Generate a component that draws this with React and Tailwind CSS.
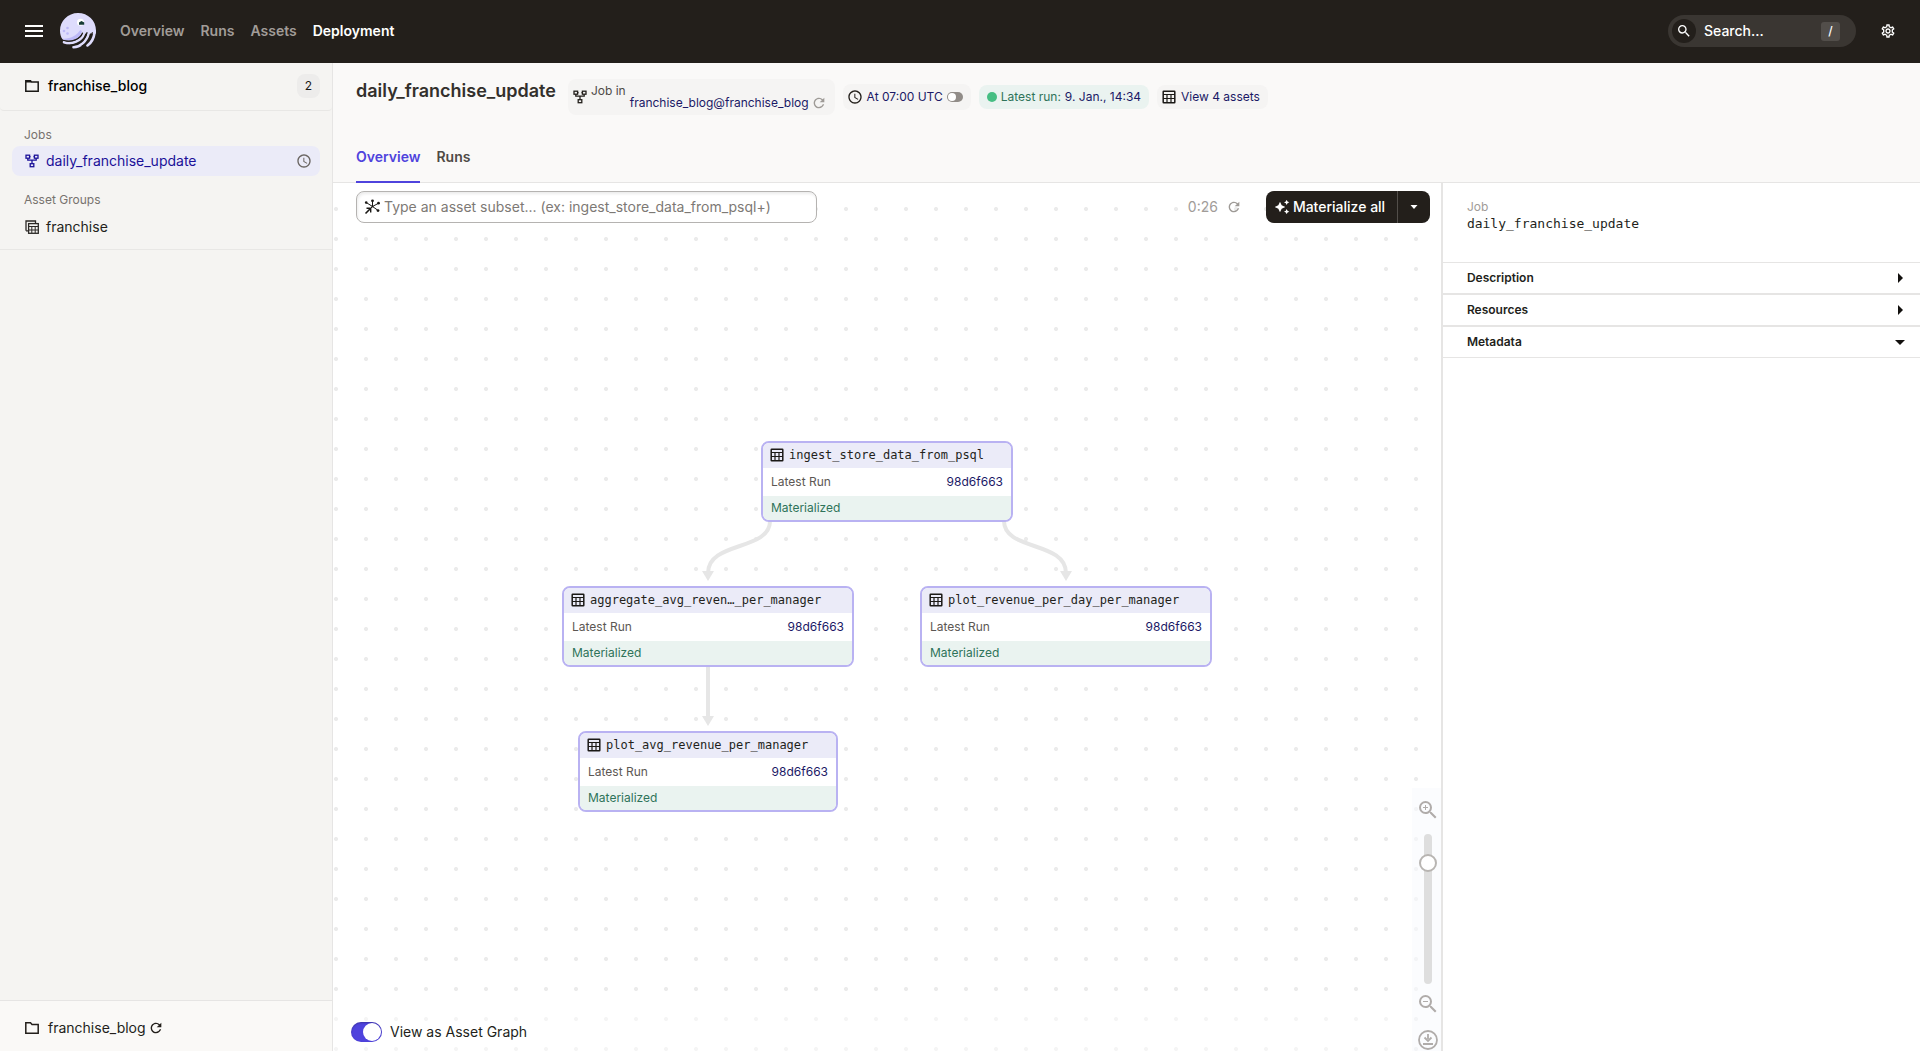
import React from "react";
import { MdAutoAwesome, MdRefresh, MdSchedule, MdSearch, MdZoomIn, MdZoomOut, MdOutlineSettings } from "react-icons/md";

function Logo() {
  return (
    <svg viewBox="0 0 36 36" className="h-9 w-9" aria-label="Dagster">
      <path
        d="M18 0C8 0 0 8 0 17.500C0 21 .8 24 2.500 26.200C4.500 27.600 8 28 11 27.500C16 26.800 20 24 21.500 20.500L36 20.500C36 19.500 36 18.500 36 17.500C36 7.500 28 0 18 0Z"
        fill="#dedcfc"
      />
      <path d="M2 25.500C4.500 27.600 8 28 11 27.500C16 26.800 20 24 21.500 20.500C22.500 18 21 16 19 18.500C16 23 9 26.500 2 25.500Z" fill="#bdb9f7" />
      <g fill="none" stroke="#dedcfc" strokeLinecap="round" strokeWidth="2.600">
        <path d="M4 29.200C12 32 21.500 28 24.200 20" />
        <path d="M13.500 34.300C20 34 26.500 29 28.800 20" />
        <path d="M27.500 32.500C31 30 33.800 26 34.600 19.500" />
      </g>
      <g fill="none" stroke="#231f1b" strokeLinecap="round" strokeWidth="1.100">
        <path d="M2.500 27.300C12 29.800 20.500 26 22.600 20" />
        <path d="M8 32.300C17 33 25 28 27 19.500" />
        <path d="M22 33C27 30.500 31 26 32.300 19.500" />
      </g>
      <circle cx="20.500" cy="9.200" r="3.500" fill="#fff" />
      <path d="M19 11.800V9.500L21.500 8L24.200 9.500V11.800Z" fill="#163b36" />
      <g fill="#bdb9f7">
        <circle cx="7.500" cy="15" r="1.300" />
        <circle cx="4" cy="18" r="1.300" />
        <circle cx="7.500" cy="20.500" r="1.300" />
      </g>
    </svg>
  );
}

function FolderIcon({ bold }) {
  return (
    <svg viewBox="0 0 14 12" className="h-3 w-3.5 shrink-0" fill="none" stroke="currentColor" strokeWidth="1.500">
      <path d={bold ? "M.8 .8H5.500L7 2.500H13.200V11.200H.8Z" : "M.8 .8H5.500L6.500 2H13.200V11.200H.8Z"} />
      {!bold && <path d="M1 1.500H6" strokeWidth="2" />}
    </svg>
  );
}

function JobIcon() {
  return (
    <svg viewBox="0 0 14 14" className="h-3.5 w-3.5 shrink-0" fill="none" stroke="currentColor" strokeWidth="1.300">
      <rect x="1" y="1.200" width="3.600" height="3" />
      <rect x="9.400" y="1.200" width="3.600" height="3" />
      <rect x="5.200" y="9.700" width="3.600" height="3" />
      <path d="M2.800 4.200V6.200H11.200V4.200M7 6.200V9.700M4.600 2.700H5.500M8.500 2.700H9.400" />
    </svg>
  );
}

function TableIcon() {
  return (
    <svg viewBox="0 0 14 14" className="h-3.5 w-3.5 shrink-0" fill="none" stroke="#1b1916">
      <rect x="1.200" y="1.200" width="11.600" height="11.600" rx=".5" strokeWidth="1.500" />
      <path d="M1 4.500H13M1 8.500H13M5 5V13M9 5V13" strokeWidth="1.200" />
    </svg>
  );
}

function AssetGroupIcon() {
  return (
    <svg viewBox="0 0 14 14" className="h-3.5 w-3.5 shrink-0" fill="none" stroke="#2c2926">
      <path d="M1 10.800V1H10.500V3" strokeWidth="1.300" />
      <path d="M1 10.800H3" strokeWidth="1.300" />
      <rect x="3.600" y="3.600" width="9.700" height="9.700" strokeWidth="1.300" />
      <path d="M3.500 6.500H13.500M3.500 10H13.500M6.800 6.500V13M10.200 6.500V13" strokeWidth="1" />
    </svg>
  );
}

function SelectorIcon() {
  return (
    <svg viewBox="0 0 16 16" className="h-4 w-4 shrink-0" fill="#1b1916" stroke="#1b1916">
      <path d="M8.500 7.500V2M8.500 7.500L3 4M8.500 7.500L14 4.500M8.500 7.500L13.500 11M8 8L2 14" fill="none" strokeWidth="1" />
      <path d="M2.500 9.300H6.700V13.500" fill="none" strokeWidth="1.400" />
      <path d="M6.500 9.500L1.500 14.500" fill="none" strokeWidth="1.600" />
      <g stroke="none">
        <circle cx="8.500" cy="1.800" r="1.400" />
        <circle cx="2.200" cy="3.600" r="1.300" />
        <circle cx="14.500" cy="4.200" r="1.400" />
        <circle cx="14" cy="11.600" r="1.400" />
        <circle cx="8.500" cy="7.500" r="1" />
      </g>
    </svg>
  );
}

function Header() {
  return (
    <header className="flex h-[63px] shrink-0 items-center bg-[#231f1b] pr-6 pb-px pl-[25px] text-sm font-semibold text-[#a19c98]">
      <button aria-label="Menu" className="flex flex-col gap-[3px]">
        <span className="h-0.5 w-[18px] bg-white" />
        <span className="h-0.5 w-[18px] bg-white" />
        <span className="h-0.5 w-[18px] bg-white" />
      </button>
      <a href="#home" className="ml-[17px]"><Logo /></a>
      <nav className="ml-6 flex gap-4">
        <a href="#overview">Overview</a>
        <a href="#runs">Runs</a>
        <a href="#assets">Assets</a>
        <a href="#deployment" className="text-white">Deployment</a>
      </nav>
      <button className="ml-auto flex h-8 w-[188px] items-center rounded-full bg-[#3a3632] pr-4 pl-1 font-medium text-white">
        <span className="flex h-6 w-6 items-center justify-center rounded-full bg-[#231f1b]">
          <MdSearch className="h-4 w-4" />
        </span>
        <span className="ml-2">Search...</span>
        <kbd className="ml-auto flex h-[19px] w-[19px] items-center justify-center rounded-[3px] bg-[#524e4a] font-[Inter,sans-serif] text-xs">/</kbd>
      </button>
      <button aria-label="Settings" className="ml-6 text-white">
        <MdOutlineSettings className="h-4 w-4" />
      </button>
    </header>
  );
}

function Sidebar() {
  return (
    <aside className="flex w-[333px] shrink-0 flex-col border-r border-[#e6e5e4] bg-[#f5f4f2] text-sm">
      <button className="flex h-12 items-center rounded-b border-b border-[#e8e7e5] pr-3 pb-px pl-[25px] text-[#1b1916]">
        <FolderIcon />
        <span className="ml-[9px] font-medium text-black">franchise_blog</span>
        <span className="ml-auto flex h-6 w-[23px] items-center justify-center rounded-lg bg-[#edeceb] text-xs">2</span>
      </button>
      <div className="border-b border-[#e8e7e5] px-3 pt-4 pb-[7px]">
        <h2 className="px-3 text-xs leading-4 text-[#77726e]">Jobs</h2>
        <a href="#job" className="mt-[3px] flex h-[30px] items-center rounded-lg bg-[#ebebf8] pr-2 pl-[13px] text-[#1b1199]">
          <JobIcon />
          <span className="ml-[7px]">daily_franchise_update</span>
          <MdSchedule className="ml-auto h-4 w-4 text-[#6a6561]" />
        </a>
        <h2 className="mt-4 px-3 text-xs leading-4 text-[#77726e]">Asset Groups</h2>
        <a href="#group" className="mt-1 flex h-[30px] items-center pl-[13px] text-[#231f1b]">
          <AssetGroupIcon />
          <span className="ml-[7px]">franchise</span>
        </a>
      </div>
      <div className="mt-auto flex h-[51px] items-center border-t border-[#e6e5e4] bg-[#faf9f7] pt-1 pl-[25px] text-[#231f1b]">
        <FolderIcon bold />
        <span className="ml-[9px]">franchise_blog</span>
        <button aria-label="Reload" className="ml-0.5"><MdRefresh className="h-4 w-4" /></button>
      </div>
    </aside>
  );
}

function TitleBar() {
  return (
    <div className="flex h-[120px] shrink-0 flex-col border-b border-[#e6e5e4] bg-[#faf9f8] px-[23px] pt-4">
      <div className="flex items-start gap-3">
        <h1 className="text-lg leading-6 font-semibold text-[#33302c]">daily_franchise_update</h1>
        <div className="flex items-center gap-2 text-xs leading-4 text-[#1b1966]">
          <div className="flex h-9 items-center rounded-lg bg-[#f5f4f3] pr-2 pl-[5px]">
            <span className="text-[#231f1b]"><JobIcon /></span>
            <span className="ml-1 self-start pt-1 text-[#4f4a46]">Job in</span>
            <a href="#location" className="ml-1 self-end pb-1">franchise_blog@franchise_blog</a>
            <button aria-label="Reload location" className="ml-0.5 self-end pb-1 text-[#9e9a96]"><MdRefresh className="h-4 w-4" /></button>
          </div>
          <div className="flex h-[26px] items-center rounded-lg bg-[#f5f4f3] pr-2 pl-1">
            <MdSchedule className="h-4 w-4 text-[#231f1b]" />
            <a href="#schedule" className="ml-1">At 07:00 UTC</a>
            <label className="ml-1 flex h-[10px] w-4 items-center rounded-full bg-[#918c88] p-px">
              <input type="checkbox" aria-label="Schedule running" className="h-2 w-2 appearance-none rounded-full bg-white" />
            </label>
          </div>
          <div className="flex h-6 items-center rounded-lg bg-[#eaf3f0] px-2 text-[#2f735a]">
            <span className="mr-1 h-2.5 w-2.5 rounded-full bg-[#46be83]" />
            <span className="mr-1">Latest run:</span>
            <a href="#run" className="text-[#1b1966]">9. Jan., 14:34</a>
          </div>
          <div className="flex h-6 items-center gap-[5px] rounded-lg bg-[#f5f4f3] pr-2 pl-[5px]">
            <TableIcon />
            <a href="#assets4">View 4 assets</a>
          </div>
        </div>
      </div>
      <div className="mt-auto -mb-px flex gap-4 text-sm font-semibold text-[#4f4a46]">
        <a href="#tab-overview" className="flex h-[43px] items-center border-b-2 border-[#4f43dd] pb-2 text-[#4f43dd]">Overview</a>
        <a href="#tab-runs" className="flex h-[43px] items-center border-b-2 border-transparent pb-2">Runs</a>
      </div>
    </div>
  );
}

function AssetNode({ name, place }) {
  return (
    <article className={`absolute overflow-hidden rounded-lg border-2 border-[#b9b2f2] bg-white text-xs ${place}`}>
      <h3 className="flex h-[25px] items-center gap-[5px] bg-[#ebebf8] pb-px pl-[7px] font-['DejaVu_Sans_Mono',monospace] whitespace-nowrap text-[#231f1b]">
        <TableIcon />
        {name}
      </h3>
      <div className="flex h-7 items-center justify-between px-2 text-[#5c5753]">
        <span>Latest Run</span>
        <a href="#run" className="text-[#1b1966]">98d6f663</a>
      </div>
      <div className="flex h-6 items-center bg-[#eaf3f0] px-2 text-[#2f735a]">Materialized</div>
    </article>
  );
}

function Graph() {
  return (
    <section className="relative flex min-w-0 flex-col overflow-hidden bg-white bg-[radial-gradient(circle,#ebebeb_1.8px,transparent_2.3px)] bg-[size:30px_30px] bg-[position:-12px_11px]">
      <svg className="absolute top-0 left-0 h-[640px] w-[900px]" fill="none" stroke="#e6e6e6" strokeWidth="4">
        <path d="M437 338C437 368 375 358 375 390" />
        <path d="M671 338C671 368 733 358 733 390" />
        <path d="M375 483V534" />
        <g fill="#e6e6e6" stroke="none">
          <path d="M369 388H381L375 398Z" />
          <path d="M727 388H739L733 398Z" />
          <path d="M369 533H381L375 543Z" />
        </g>
      </svg>
      <AssetNode name="ingest_store_data_from_psql" place="left-[428px] top-[258px] w-[252px]" />
      <AssetNode name="aggregate_avg_reven…_per_manager" place="left-[229px] top-[403px] w-[292px]" />
      <AssetNode name="plot_revenue_per_day_per_manager" place="left-[587px] top-[403px] w-[292px]" />
      <AssetNode name="plot_avg_revenue_per_manager" place="left-[245px] top-[548px] w-[260px]" />

      <div className="relative flex items-center pt-2 pr-[11px] pl-[23px] text-sm">
        <label className="flex h-8 w-[461px] items-center gap-1 rounded-lg border border-[#b5b3b1] bg-white px-[7px] shadow-[inset_1px_2px_3px_#00000014]">
          <SelectorIcon />
          <input
            aria-label="Asset subset"
            placeholder="Type an asset subset... (ex: ingest_store_data_from_psql+)"
            className="min-w-0 flex-1 bg-transparent outline-none placeholder:text-[#7d7975]"
          />
        </label>
        <span className="ml-auto text-[#a19c98]">0:26</span>
        <button aria-label="Refresh" className="ml-2 text-[#9e9a96]"><MdRefresh className="h-4 w-4" /></button>
        <div className="ml-6 flex h-8 overflow-hidden rounded-lg bg-[#231f1b] text-white">
          <button className="flex w-[131px] items-center gap-[3px] pl-2 font-medium whitespace-nowrap">
            <MdAutoAwesome className="h-4 w-4" />
            Materialize all
          </button>
          <button aria-label="More options" className="flex w-[33px] items-center justify-center border-l border-[#524e4a]">
            <svg viewBox="0 0 8 4" className="h-1 w-2"><path d="M.5 0H7.500L4 4Z" fill="currentColor" /></svg>
          </button>
        </div>
      </div>

      <div className="relative mt-auto flex items-end">
        <label className="flex h-12 flex-1 items-center gap-2 bg-white/50 pt-[10px] pl-[18px] text-sm text-[#231f1b]">
          <input type="checkbox" defaultChecked className="peer sr-only" />
          <span className="flex h-5 w-[31px] justify-end rounded-full bg-[#4f43dd] p-px shadow-[inset_0_1px_2px_#00000040]">
            <span className="h-[18px] w-[18px] rounded-full bg-white" />
          </span>
          View as Asset Graph
        </label>
        <div className="flex h-[263px] w-[29px] flex-col items-center bg-[#f8fafd]/60 pt-[10px] pl-1 text-[#b0acaa]">
          <button aria-label="Zoom in"><MdZoomIn className="h-6 w-6" /></button>
          <div className="relative mt-3 h-[150px] w-2 rounded bg-[#dedede]">
            <input
              type="range"
              aria-label="Zoom"
              defaultValue="85"
              className="absolute top-0 -left-[5px] m-0 h-[150px] w-[18px] appearance-none bg-transparent [direction:rtl] [writing-mode:vertical-lr] [&::-webkit-slider-thumb]:h-[18px] [&::-webkit-slider-thumb]:w-[18px] [&::-webkit-slider-thumb]:appearance-none [&::-webkit-slider-thumb]:rounded-full [&::-webkit-slider-thumb]:border-2 [&::-webkit-slider-thumb]:border-[#b8b5b2] [&::-webkit-slider-thumb]:bg-white"
            />
          </div>
          <button aria-label="Zoom out" className="mt-2"><MdZoomOut className="h-6 w-6" /></button>
          <button aria-label="Download" className="mt-[14px]">
            <svg viewBox="0 0 20 20" className="h-5 w-5" fill="none" stroke="currentColor" strokeWidth="1.800">
              <circle cx="10" cy="10" r="9" />
              <path d="M5 14H15M10 4V9" />
              <path d="M6.500 7.500L10 11L13.500 7.500" />
            </svg>
          </button>
        </div>
      </div>
    </section>
  );
}

function PanelRow({ title, open }) {
  return (
    <button aria-expanded={!!open} className="flex h-8 w-full items-center justify-between border-y border-[#e6e5e4] pr-3 pl-6 text-xs font-semibold text-[#231f1b]">
      {title}
      <svg viewBox="0 0 16 16" className="h-4 w-4" fill="#12100e">
        <path d={open ? "M3 6H13L8 11Z" : "M6 3V13L11 8Z"} />
      </svg>
    </button>
  );
}

export default function App() {
  return (
    <div className="flex h-screen flex-col overflow-hidden bg-white font-[Inter,sans-serif]">
      <Header />
      <div className="flex min-h-0 flex-1">
        <Sidebar />
        <main className="flex min-w-0 flex-1 flex-col">
          <TitleBar />
          <div className="grid min-h-0 flex-1 grid-cols-[minmax(0,37fr)_minmax(0,16fr)]">
            <Graph />
            <aside className="border-l-2 border-[#e6e5e4] bg-white">
              <div className="h-[79px] pt-4 pl-6">
                <p className="text-xs leading-4 text-[#a19c98]">Job</p>
                <h2 className="font-['DejaVu_Sans_Mono',monospace] text-[13px] leading-[18px] text-[#231f1b]">daily_franchise_update</h2>
              </div>
              <PanelRow title="Description" />
              <PanelRow title="Resources" />
              <PanelRow title="Metadata" open />
            </aside>
          </div>
        </main>
      </div>
    </div>
  );
}
